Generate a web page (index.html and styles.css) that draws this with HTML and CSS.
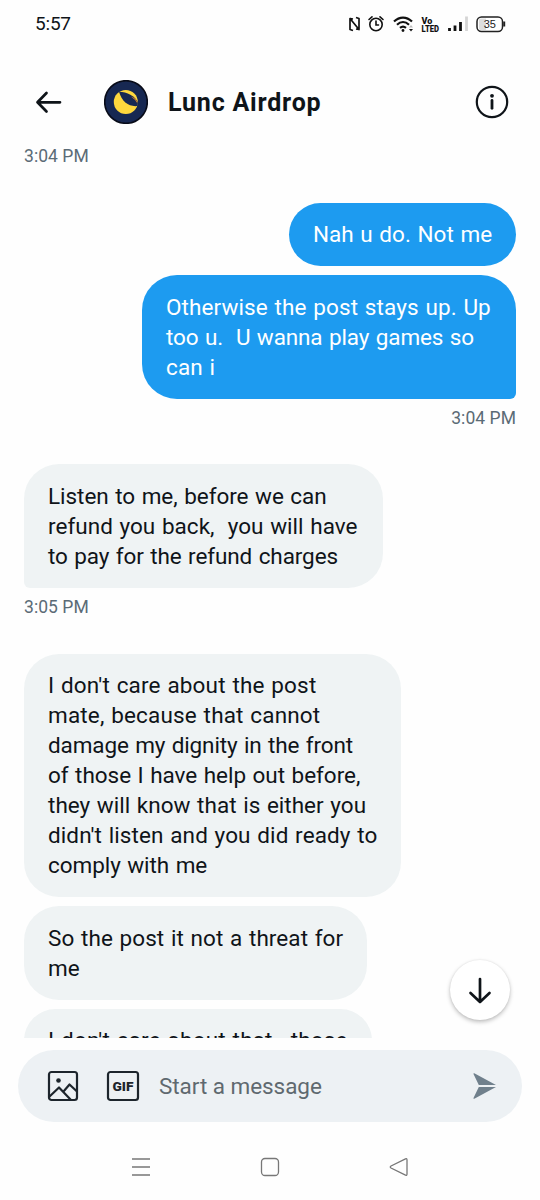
FILE: index.html
```html
<!DOCTYPE html>
<html lang="en">
<head>
<meta charset="utf-8">
<title>Lunc Airdrop</title>
<link rel="stylesheet" href="styles.css">
</head>
<body>
<div class="phone">
  <div class="status">
    <span class="clock">5:57</span>
    <svg class="status-icons" width="160" height="24" viewBox="0 0 160 24" fill="none">
      <path d="M5 18.500L2 17.500V6.500L11 17.500V6.500L8 5.500M2 6.500l3 .5M11 17.500l-3-.500" stroke="#111" stroke-width="1.700" stroke-linejoin="round"/>
      <g stroke="#111" stroke-width="1.600" stroke-linecap="round"><circle cx="28" cy="12.500" r="6.200"/><path d="M28 9v4h2.500M21 7.500l3-2.700M35 7.500l-3-2.700"/></g>
      <g stroke="#111" stroke-width="2.200"><path d="M46 9.500c5.500-5.300 12.500-5.300 18 0M49 12.700c3.700-3.400 8.300-3.400 12 0M52 15.800c2-1.700 4-1.700 6 0"/></g>
      <circle cx="55" cy="18.500" r="1.400" fill="#111"/><path d="M61 15.500l2-2.500 2 2.500z" fill="#bbb"/><path d="M61 17l2 2.600 2-2.600z" fill="#111"/>
      <text class="volte" x="73.500" y="11.500">Vo</text>
      <text class="volte" x="73.500" y="19.500" textLength="17.500" lengthAdjust="spacingAndGlyphs">LTED</text>
      <path d="M101.500 16v3M107 13.500V19M112.500 10V19" stroke="#111" stroke-width="2.800"/><path d="M118.500 4.500V19" stroke="#d5d5d5" stroke-width="2.800"/>
      <rect x="129" y="5" width="25.500" height="14.500" rx="4.500" fill="#fff" stroke="#222" stroke-width="1.500"/><path d="M131 8q0-1.500 2-1.500h5v11.500h-5q-2 0-2-1.500z" fill="#ddd"/><path d="M156.200 9.500v5" stroke="#222" stroke-width="2"/>
      <text class="charge" x="135.800" y="16.100" textLength="12">35</text>
    </svg>
  </div>
  <header class="header">
    <svg class="back" width="28" height="24" viewBox="0 0 28 24" fill="none" stroke="#0f1419" stroke-width="2.700" stroke-linecap="round" stroke-linejoin="round"><path d="M25 12.300H2.500M11.500 3L2.500 12.300l9 9.200"/></svg>
    <svg class="avatar" width="44" height="44" viewBox="0 0 44 44"><circle cx="22" cy="22" r="21.300" fill="#172852" stroke="#080b18" stroke-width="1.600"/><circle cx="21.800" cy="22" r="12" fill="#ffd83d"/><path d="M15 11.800C23 12 31 16 34 22.500L33.500 26C25 27 18 22 15 11.800z" fill="#172852"/><path d="M27 16.500q6 2 6.500 7q-2-4-6.500-7z" fill="#f28b2b"/></svg>
    <h1 class="name">Lunc Airdrop</h1>
    <svg class="info" width="34" height="34" viewBox="0 0 34 34" fill="none" stroke="#0f1419"><circle cx="17" cy="17" r="15.200" stroke-width="2.200"/><path d="M17 15.500v7.800" stroke-width="2.800" stroke-linecap="round"/><circle cx="17" cy="10.800" r="1.900" fill="#0f1419" stroke="none"/></svg>
  </header>
  <main class="thread">
    <time class="time first">3:04 PM</time>
    <div class="bubble out w1"><span class="l l1">Nah u do. Not me</span></div>
    <div class="bubble out tail-r w2"><span class="l l2">Otherwise the post stays up. Up</span><span class="l l3">too u.  U wanna play games so</span><span class="l l4">can i</span></div>
    <time class="time right">3:04 PM</time>
    <div class="bubble tail-l w3"><span class="l l5">Listen to me, before we can</span><span class="l l6">refund you back,  you will have</span><span class="l l7">to pay for the refund charges</span></div>
    <time class="time">3:05 PM</time>
    <div class="bubble w4"><span class="l l8">I don't care about the post</span><span class="l l9">mate, because that cannot</span><span class="l l10">damage my dignity in the front</span><span class="l l11">of those I have help out before,</span><span class="l l12">they will know that is either you</span><span class="l l13">didn't listen and you did ready to</span><span class="l l14">comply with me</span></div>
    <div class="bubble w5"><span class="l l15">So the post it not a threat for</span><span class="l">me</span></div>
    <div class="bubble w6"><span class="l l17">I don't care about that,  those</span></div>
    <button class="jump" aria-label="Scroll down"><svg width="24" height="28" viewBox="0 0 24 28" fill="none" stroke="#0f1419" stroke-width="2.700" stroke-linecap="round" stroke-linejoin="round"><path d="M12 3v23M2.500 17L12 26l9.500-9"/></svg></button>
  </main>
  <div class="composer">
    <svg width="32" height="32" viewBox="0 0 32 32" fill="none" stroke="#1d252c" stroke-width="2.200" stroke-linejoin="round"><rect x="2" y="2" width="28" height="28" rx="2.500"/><path d="M2 27l10-9.500L24 30M16.500 21.500l6-7L30 21.500"/><circle cx="11.500" cy="10.500" r="2.300" fill="#1d252c" stroke="none"/></svg>
    <svg class="gif" width="34" height="32" viewBox="0 0 34 32" fill="none"><rect x="2" y="2" width="30" height="28" rx="2.500" stroke="#1d252c" stroke-width="2.200"/><text class="gif-text" x="6.500" y="20.700" textLength="21" lengthAdjust="spacingAndGlyphs">GIF</text></svg>
    <span class="placeholder">Start a message</span>
    <svg class="send" width="26" height="28" viewBox="0 0 26 28" fill="#70808c"><path d="M3.300 1.300L25 13H7.800L2.500 2Q2.300.8 3.300 1.300zM3.300 26.700L25 15H7.800L2.500 26Q2.300 27.200 3.300 26.700z"/></svg>
  </div>
  <nav class="nav">
    <svg width="20" height="20" viewBox="0 0 20 20" fill="none" stroke="#777" stroke-width="1.300"><path d="M1 2h18M1 10h18M1 18h18"/></svg>
    <svg width="20" height="20" viewBox="0 0 20 20" fill="none" stroke="#777" stroke-width="1.300"><rect x="1.500" y="1.500" width="17" height="17" rx="3.500"/></svg>
    <svg width="20" height="20" viewBox="0 0 20 20" fill="none" stroke="#777" stroke-width="1.300" stroke-linejoin="round"><path d="M2 9L16.500 1.800Q18 1.300 18 3v14q0 1.700-1.500 1.200L2 11Q.500 10 2 9z"/></svg>
  </nav>
</div>
</body>
</html>
```
FILE: styles.css
```css
* { box-sizing: border-box; }
body { margin: 0; background: #fff; font-family: Roboto, "Liberation Sans", sans-serif; color: #0f1419; }
.phone { width: 540px; height: 1200px; display: flex; flex-direction: column; overflow: hidden; background: #fefefe; }
svg { flex: none; display: block; }
.status { height: 48px; padding: 0 32px 0 35px; display: flex; align-items: center; justify-content: space-between; }
.clock { font-size: 19px; letter-spacing: -0.200px; margin-top: -2px; }
.status-icons { width: 160px; }
.volte { font: 900 9px Roboto, sans-serif; fill: #111; }
.charge { font: 11px "Liberation Sans", sans-serif; fill: #222; }
.header { height: 90px; padding: 18px 31px 0 35px; display: flex; align-items: center; }
.avatar { margin-left: 41px; }
.name { margin: 2px auto 0 20px; font-size: 25px; line-height: 30px; font-weight: 700; letter-spacing: 0.800px; }
.thread { position: relative; height: 900px; overflow: hidden; padding: 8px 24px 0; display: flex; flex-direction: column; align-items: flex-start; }
.time { font-size: 17.500px; line-height: 20px; color: #5b6b76; margin: 9px 0 37px; letter-spacing: 0.050px; white-space: nowrap; }
.time.right { align-self: flex-end; margin-bottom: 36.300px; }
.time.first { margin-top: 0; }
.bubble { flex: none; padding: 16.400px 24px 17.100px; margin-bottom: 9px; border-radius: 35px; background: #eff3f4; font-size: 22.500px; line-height: 30px; }
.bubble.out { align-self: flex-end; background: #1d9bf0; color: #fff; }
.bubble.tail-r { border-bottom-right-radius: 6px; margin-bottom: 0; }
.bubble.tail-l { border-bottom-left-radius: 6px; margin-bottom: 0; }
.l { display: block; width: max-content; white-space: pre; word-spacing: 1px; }
.l1 { letter-spacing: 0.020px; }
.l2 { letter-spacing: 0.110px; }
.l3 { letter-spacing: -0.120px; }
.l4 { letter-spacing: 0.130px; }
.l5 { letter-spacing: -0.040px; }
.l6 { letter-spacing: 0.030px; }
.l7 { letter-spacing: -0.100px; }
.l8 { letter-spacing: 0.160px; }
.l9 { letter-spacing: 0.160px; }
.l10 { letter-spacing: -0.130px; }
.l11 { letter-spacing: -0.040px; }
.l12 { letter-spacing: 0.020px; }
.l13 { letter-spacing: 0.100px; }
.l14 { letter-spacing: -0.060px; }
.l15 { letter-spacing: 0.070px; }
.l17 { letter-spacing: 0.170px; }
.w1 { width: 227px; }
.w2 { width: 374px; }
.w3 { width: 359px; }
.w4 { width: 377px; }
.w5 { width: 343px; }
.w6 { width: 348px; }
.jump { position: absolute; right: 30px; bottom: 18px; width: 60px; height: 60px; border: 0; padding: 0; border-radius: 50%; background: #fff; box-shadow: 0 2px 4px rgba(0,0,0,.25), 0 0 2px rgba(0,0,0,.08); display: grid; place-items: center; }
.composer { height: 72px; margin: 12px 18px 0; padding: 0 25px 0 29px; border-radius: 36px; background: #edf1f4; display: flex; align-items: center; flex: none; }
.gif { margin-left: 27px; }
.gif-text { font: 900 13px Roboto, sans-serif; fill: #1d252c; }
.placeholder { margin-left: 19px; font-size: 22.500px; letter-spacing: -0.050px; color: #5f696f; }
.send { margin-left: auto; }
.nav { height: 78px; padding: 12px 131px 0; display: flex; align-items: center; justify-content: space-between; }
```
